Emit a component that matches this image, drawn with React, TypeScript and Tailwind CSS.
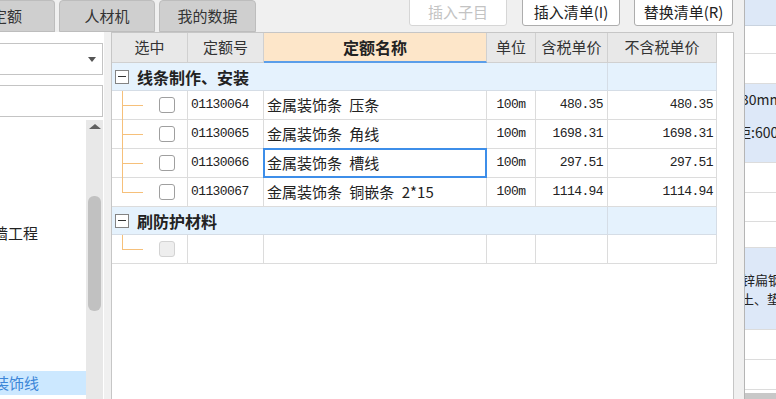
import React from "react";

type Row = { code: string; name: string; unit: string; p1: string; p2: string };

const rows: Row[] = [
  { code: "01130064", name: "金属装饰条 压条", unit: "100m", p1: "480.35", p2: "480.35" },
  { code: "01130065", name: "金属装饰条 角线", unit: "100m", p1: "1698.31", p2: "1698.31" },
  { code: "01130066", name: "金属装饰条 槽线", unit: "100m", p1: "297.51", p2: "297.51" },
  { code: "01130067", name: "金属装饰条 铜嵌条 2*15", unit: "100m", p1: "1114.94", p2: "1114.94" },
];

function Check({ disabled = false }: { disabled?: boolean }) {
  return (
    <span
      className={
        disabled
          ? "block h-[16px] w-[16px] rounded-[3px] border border-[#d3d3d3] bg-[#eeeeee]"
          : "block h-[16px] w-[16px] rounded-[3px] border border-[#9f9f9f] bg-white"
      }
    />
  );
}

function TreeCell({ last = false, disabled = false }: { last?: boolean; disabled?: boolean }) {
  return (
    <div className="relative flex items-center border-r border-b border-[#dcdcdc] pl-[47px]">
      <span
        className={
          last
            ? "absolute left-[10px] top-0 h-1/2 w-px bg-[#f6c07a]"
            : "absolute left-[10px] top-0 -bottom-px w-px bg-[#f6c07a]"
        }
      />
      <span className="absolute left-[10px] top-1/2 h-px w-[21px] bg-[#f6c07a]" />
      <Check disabled={disabled} />
    </div>
  );
}

function GroupRow({ title }: { title: string }) {
  return (
    <>
      <div className="col-span-5 flex items-center border-r border-b border-[#d5dde6] bg-[#e5f2fd] pl-[3px]">
        <span className="flex h-[14px] w-[14px] items-center justify-center border border-[#838383] bg-white">
          <span className="h-px w-[8px] bg-[#333]" />
        </span>
        <span className="ml-[8px] text-[16px] font-bold leading-none text-[#222]">{title}</span>
      </div>
      <div className="border-r border-b border-[#d5dde6] bg-[#e5f2fd]" />
    </>
  );
}

const cell = "flex items-center border-r border-b border-[#dcdcdc] bg-white";
const head = "flex items-center justify-center border-r border-b border-[#d0d0d0] bg-[#e8e8e8] text-[15px] text-[#333]";
const mono = "font-['Liberation_Mono',monospace] text-[13px] tracking-[-0.6px] text-[#222]";

export default function App() {
  return (
    <div className="flex h-[399px] w-[776px] overflow-hidden bg-[#f0f0f0] font-['Microsoft_YaHei','Noto_Sans_CJK_SC',sans-serif] text-[15px] text-[#333]">
      {/* main column */}
      <div className="flex w-[734px] shrink-0 flex-col">
        {/* top bar */}
        <div className="flex h-[32px] shrink-0 items-start">
          <div className="flex h-[32px] w-[55px] items-center overflow-hidden rounded-tr-[4px] border border-l-0 border-[#bdbdbd] bg-[#cfcfcf]">
            <span className="-ml-[8px] whitespace-nowrap text-[#333]">定额</span>
          </div>
          <div className="ml-[4px] flex h-[32px] w-[96px] items-center justify-center rounded-t-[4px] border border-[#bdbdbd] bg-[#cfcfcf] text-[#333]">
            人材机
          </div>
          <div className="ml-[4px] flex h-[32px] w-[97px] items-center justify-center rounded-t-[4px] border border-[#bdbdbd] bg-[#cfcfcf] text-[#333]">
            我的数据
          </div>
          <div className="-mt-[4px] ml-auto mr-[1px] flex">
            <button className="flex h-[30px] w-[98px] items-center justify-center rounded-[3px] border border-[#d6d6d6] bg-white pt-[2px] text-[15px] text-[#c3c3c3]">
              插入子目
            </button>
            <button className="ml-[15px] flex h-[30px] w-[98px] items-center justify-center rounded-[3px] border border-[#adadad] bg-white pt-[2px] text-[15px] text-[#222]">
              插入清单(I)
            </button>
            <button className="ml-[14px] flex h-[30px] w-[99px] items-center justify-center rounded-[3px] border border-[#adadad] bg-white pt-[2px] text-[15px] text-[#222]">
              替换清单(R)
            </button>
          </div>
        </div>

        {/* body */}
        <div className="flex min-h-0 flex-1">
          {/* left panel */}
          <div className="flex w-[104px] shrink-0 flex-col bg-white">
            <div className="-ml-[2px] mt-[11px] flex h-[32px] w-[105px] items-center justify-end border border-[#c4c4c4] pr-[6px]">
              <span className="h-0 w-0 border-x-[4px] border-t-[5px] border-x-transparent border-t-[#555]" />
            </div>
            <div className="-ml-[2px] mt-[10px] h-[32px] w-[105px] border border-[#c4c4c4]" />
            <div className="mt-[3px] flex min-h-0 flex-1">
              <div className="flex w-[86px] flex-col overflow-hidden">
                <div className="mt-[101px] flex h-[24px] items-center whitespace-nowrap">
                  <span className="-ml-[7px] text-[#222]">墙工程</span>
                </div>
                <div className="mt-[126px] flex h-[24px] items-center whitespace-nowrap bg-[#cce8ff]">
                  <span className="-ml-[6px] text-[#3d86d8]">装饰线</span>
                </div>
              </div>
              <div className="flex w-[17px] flex-col items-center bg-[#e8e8e8]">
                <span className="mt-[4px] h-0 w-0 border-x-[6px] border-b-[5px] border-x-transparent border-b-[#606060]" />
                <span className="mt-[67px] h-[115px] w-[13px] rounded-[6px] bg-[#c1c1c1]" />
              </div>
            </div>
          </div>

          {/* table container */}
          <div className="ml-[7px] flex-1 border-t border-l border-r border-[#c6c6c6] bg-white">
            <div className="grid w-[605px] grid-cols-[76px_76px_223px_49px_72px_109px] grid-rows-[30px_28px_29px_29px_29px_29px_28px_29px]">
              <div className={head}>选中</div>
              <div className={head}>定额号</div>
              <div className="flex items-center justify-center border-r border-b-[2px] border-r-[#d0d0d0] border-b-[#5b9ee9] bg-[#fde6c9] text-[16px] font-bold text-[#222]">
                定额名称
              </div>
              <div className={head}>单位</div>
              <div className={head}>含税单价</div>
              <div className={head}>不含税单价</div>

              <GroupRow title="线条制作、安装" />

              {rows.map((r, i) => (
                <React.Fragment key={r.code}>
                  <TreeCell last={i === rows.length - 1} />
                  <div className={`${cell} pl-[3px] ${mono}`}>{r.code}</div>
                  <div className={`${cell} relative whitespace-nowrap pl-[3px] text-[15px] text-[#222] [word-spacing:4px]`}>
                    {r.name}
                    {i === 2 && (
                      <span className="absolute -top-px -right-px -bottom-px -left-px z-10 border-2 border-[#3d8ee9]" />
                    )}
                  </div>
                  <div className={`${cell} justify-center ${mono}`}>{r.unit}</div>
                  <div className={`${cell} justify-end pr-[4px] ${mono}`}>{r.p1}</div>
                  <div className={`${cell} justify-end pr-[3px] ${mono}`}>{r.p2}</div>
                </React.Fragment>
              ))}

              <GroupRow title="刷防护材料" />

              <TreeCell last disabled />
              <div className={cell} />
              <div className={cell} />
              <div className={cell} />
              <div className={cell} />
              <div className={cell} />
            </div>
          </div>
        </div>
      </div>

      {/* separator */}
      <div className="w-[11px] shrink-0 border-r border-[#b5b5b5] bg-[#f0f0f0]" />

      {/* right panel */}
      <div className="flex w-[31px] shrink-0 flex-col overflow-hidden bg-white text-[14px] text-[#222]">
        <div className="h-[26px] shrink-0 border-b border-[#c9d3df] bg-[#dde8f7]" />
        <div className="h-[28px] shrink-0 border-b border-[#dcdcdc]" />
        <div className="h-[30px] shrink-0 border-b border-[#dcdcdc]" />
        <div className="flex h-[79px] shrink-0 flex-col whitespace-nowrap border-b border-[#dcdcdc] bg-[#dde8f8] pt-[7px] leading-[17px]">
          <span className="-ml-[4px]">30mm厚</span>
          <span className="mt-[16px] -ml-[8px]">距:600</span>
        </div>
        <div className="h-[30px] shrink-0 border-b border-[#dcdcdc]" />
        <div className="h-[29px] shrink-0 border-b border-[#dcdcdc]" />
        <div className="h-[26px] shrink-0 border-b border-[#dcdcdc]" />
        <div className="flex h-[82px] shrink-0 flex-col justify-center whitespace-nowrap border-b border-[#dcdcdc] bg-[#dde8f8] text-[13px] leading-[19px]">
          <span className="-ml-[3px]">锌扁钢</span>
          <span className="-ml-[4px]">土、垫层</span>
        </div>
        <div className="h-[30px] shrink-0 border-b border-[#dcdcdc]" />
        <div className="h-[30px] shrink-0 border-b border-[#dcdcdc]" />
        <div className="flex-1" />
        <div className="h-[6px] shrink-0 bg-[#c8c8c8]" />
      </div>
    </div>
  );
}
